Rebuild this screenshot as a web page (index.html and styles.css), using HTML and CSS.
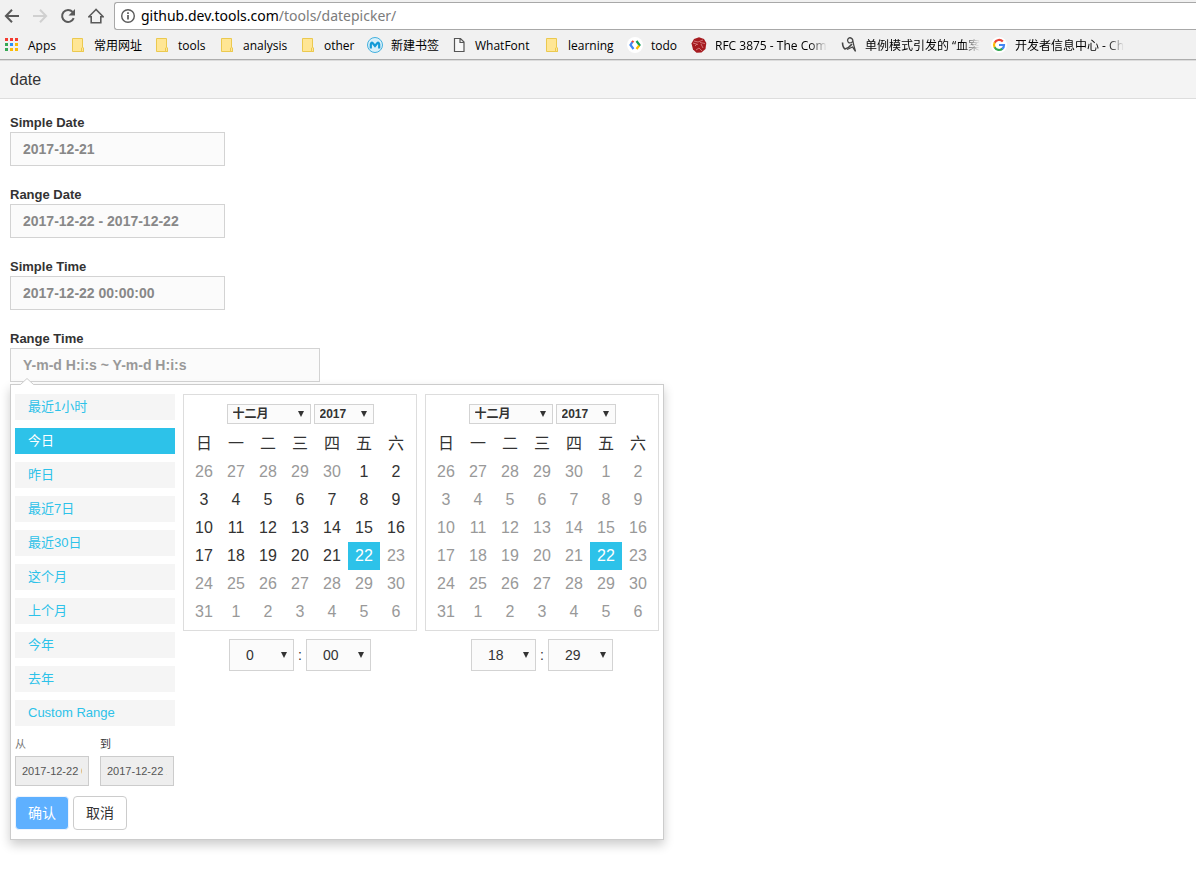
FILE: index.html
```html
<!DOCTYPE html>
<html lang="zh-CN">
<head>
<meta charset="utf-8">
<title>date</title>
<link rel="stylesheet" href="styles.css">
</head>
<body>
<svg class="defs" aria-hidden="true">
  <symbol id="folder" viewBox="0 0 16 16"><path d="M2.500 1.500h10v9.500h1v3.500h-11z" fill="#ffe694" stroke="#ebc94f"/><path d="M11.500 14.500v-3.500q1-1.500 2 0v3.500z" fill="#ffe694" stroke="#ebc94f"/></symbol>
</svg>
<div class="browser">
  <div class="toolbar">
    <button class="nav-btn" aria-label="Back"><svg viewBox="0 0 16 16"><path d="M15 8H2.500M8 1.800 1.900 8 8 14.200" fill="none" stroke="#5a5a5a" stroke-width="2"/></svg></button>
    <button class="nav-btn" aria-label="Forward" disabled><svg viewBox="0 0 16 16"><path d="M1 8h12.500M8 1.800 14.100 8 8 14.200" fill="none" stroke="#d0d0d0" stroke-width="2"/></svg></button>
    <button class="nav-btn" aria-label="Reload"><svg viewBox="0 0 16 16"><path d="M13.700 10.200A6 6 0 1 1 12.600 4" fill="none" stroke="#5a5a5a" stroke-width="2"/><path d="M15 1v6.500H8.500z" fill="#5a5a5a"/></svg></button>
    <button class="nav-btn" aria-label="Home"><svg viewBox="0 0 16 16"><path d="M8 1.500.800 8.800H3.200v6h9.600v-6h2.400z" fill="none" stroke="#5a5a5a" stroke-width="1.600"/></svg></button>
    <div class="omnibox">
      <svg class="info" viewBox="0 0 16 16"><circle cx="8" cy="8" r="6.300" fill="none" stroke="#5a5a5a" stroke-width="1.400"/><path d="M8 7v4.500M8 4.300v1.700" stroke="#5a5a5a" stroke-width="1.700"/></svg>
      <span class="url">github.dev.tools.com<span class="url-path">/tools/datepicker/</span></span>
    </div>
  </div>
  <nav class="bookmarks">
    <a class="bm" href="#"><svg viewBox="0 0 16 16"><path d="M1 1h3v3H1zM6 1h3v3H6zM11 1h3v3h-3z" fill="#f33b30"/><path d="M1 6h3v3H1zM1 11h3v3H1z" fill="#35a854"/><path d="M6 6h3v3H6z" fill="#2a90f5"/><path d="M11 6h3v3h-3zM6 11h3v3H6zM11 11h3v3h-3z" fill="#fbbc05"/></svg><span>Apps</span></a>
    <a class="bm" href="#"><svg><use href="#folder"/></svg><span>常用网址</span></a>
    <a class="bm" href="#"><svg><use href="#folder"/></svg><span>tools</span></a>
    <a class="bm" href="#"><svg><use href="#folder"/></svg><span>analysis</span></a>
    <a class="bm" href="#"><svg><use href="#folder"/></svg><span>other</span></a>
    <a class="bm" href="#"><svg viewBox="0 0 16 16"><circle cx="8" cy="8" r="7.500" fill="#d8f0fa" stroke="#43b0de"/><path d="M3.800 11.500V7.200Q4.300 4.500 6 6.500L8 9l2-2.500Q11.700 4.500 12.200 7.200v4.300" fill="none" stroke="#149bd7" stroke-width="2.200"/></svg><span>新建书签</span></a>
    <a class="bm" href="#"><svg viewBox="0 0 16 16"><path d="M3.500 1.500h6l3.500 3.500v9.500H3.500zM9 1.500V5.500h4" fill="#f8f8f8" stroke="#555" stroke-width="1.200"/></svg><span>WhatFont</span></a>
    <a class="bm" href="#"><svg><use href="#folder"/></svg><span>learning</span></a>
    <a class="bm" href="#"><svg viewBox="0 0 16 16"><circle cx="8" cy="8" r="8" fill="#fff"/><g fill="none" stroke-width="2.200"><path d="M6.500 4 4.800 5.500" stroke="#ea4335"/><path d="M5.200 5.200 3.500 8l3 4" stroke="#4285f4"/><path d="M9.500 4l3 4-.8 1" stroke="#0f9d58"/><path d="M12.200 8.500 9.500 12" stroke="#fbbc05"/></g></svg><span>todo</span></a>
    <a class="bm" href="#"><svg viewBox="0 0 16 16"><path d="M8 .3 13 2l2.300 4-.8 6-4 3.500-5 .2-3.500-3.200L.500 6.500 3 2z" fill="#a61b20"/><path d="M3 4l4 1 5-2M2 6l5 1.500M9 5.500l5 1M4 9l2-2M10 7l2 4M5 13l3-2 3 3" fill="none" stroke="#dd8c8d" stroke-width=".8"/></svg><span>RFC 3875 - The Com</span></a>
    <a class="bm" href="#"><svg viewBox="0 0 16 16"><path d="M1.500 5.500q.2 5 2.500 6.500Q8 11 11 7" fill="none" stroke="#444" stroke-width="1.600"/><path d="M6.500 3Q8-.500 10.800 1.500 13 4 10.500 5.500 7 7 6.500 3M11.500 2q1 6 3 12.500L11.500 10 6 12.500" fill="none" stroke="#444" stroke-width="1.300"/></svg><span>单例模式引发的 “血案</span></a>
    <a class="bm" href="#"><svg viewBox="0 0 16 16"><circle cx="8" cy="8" r="8" fill="#fff"/><g fill="none" stroke-width="2.200"><path d="M11.800 4.600A5 5 0 0 0 3.600 5.700" stroke="#ea4335"/><path d="M3.700 5.500a5 5 0 0 0 0 5" stroke="#fbbc05"/><path d="M3.600 10.300a5 5 0 0 0 7.900 1.300" stroke="#34a853"/><path d="M11.200 11.900A5 5 0 0 0 13 8H8" stroke="#4285f4"/></g></svg><span>开发者信息中心 - Ch</span></a>
  </nav>
</div>
<header class="page-head">date</header>
<main class="form">
  <div class="field"><label for="sd">Simple Date</label><input id="sd" type="text" value="2017-12-21"></div>
  <div class="field"><label for="rd">Range Date</label><input id="rd" type="text" value="2017-12-22 - 2017-12-22"></div>
  <div class="field"><label for="st">Simple Time</label><input id="st" type="text" value="2017-12-22 00:00:00"></div>
  <div class="field"><label for="rt">Range Time</label><input id="rt" class="wide" type="text" placeholder="Y-m-d H:i:s ~ Y-m-d H:i:s">
    <div class="picker">
      <svg class="caret" viewBox="0 0 14 7"><path d="M0 7 7 0l7 7z" fill="#fff"/><path d="M0 6.500h.5l6.500-6 6.500 6h.5" fill="none" stroke="#ccc"/></svg>
      <div class="side">
        <ul class="ranges">
          <li><button>最近1小时</button></li>
          <li><button class="active">今日</button></li>
          <li><button>昨日</button></li>
          <li><button>最近7日</button></li>
          <li><button>最近30日</button></li>
          <li><button>这个月</button></li>
          <li><button>上个月</button></li>
          <li><button>今年</button></li>
          <li><button>去年</button></li>
          <li><button>Custom Range</button></li>
        </ul>
        <div class="bounds">
          <div class="bound"><label class="from" for="from">从</label><input id="from" type="text" value="2017-12-22 00:00:00"></div>
          <div class="bound"><label for="to">到</label><input id="to" type="text" value="2017-12-22 18:29:00"></div>
        </div>
        <div class="actions"><button class="btn primary">确认</button><button class="btn">取消</button></div>
      </div>
      <div class="cal">
        <div class="month">
          <div class="month-head"><select class="sel-month" aria-label="Start month"><option>十二月</option></select><select class="sel-year" aria-label="Start year"><option>2017</option></select></div>
          <table>
            <thead><tr><th>日</th><th>一</th><th>二</th><th>三</th><th>四</th><th>五</th><th>六</th></tr></thead>
            <tbody>
              <tr><td class="off">26</td><td class="off">27</td><td class="off">28</td><td class="off">29</td><td class="off">30</td><td>1</td><td>2</td></tr>
              <tr><td>3</td><td>4</td><td>5</td><td>6</td><td>7</td><td>8</td><td>9</td></tr>
              <tr><td>10</td><td>11</td><td>12</td><td>13</td><td>14</td><td>15</td><td>16</td></tr>
              <tr><td>17</td><td>18</td><td>19</td><td>20</td><td>21</td><td class="on">22</td><td class="off">23</td></tr>
              <tr class="off"><td>24</td><td>25</td><td>26</td><td>27</td><td>28</td><td>29</td><td>30</td></tr>
              <tr class="off"><td>31</td><td>1</td><td>2</td><td>3</td><td>4</td><td>5</td><td>6</td></tr>
            </tbody>
          </table>
        </div>
        <div class="time"><select aria-label="Start hour"><option>0</option></select><span>:</span><select aria-label="Start minute"><option>00</option></select></div>
      </div>
      <div class="cal">
        <div class="month">
          <div class="month-head"><select class="sel-month" aria-label="End month"><option>十二月</option></select><select class="sel-year" aria-label="End year"><option>2017</option></select></div>
          <table>
            <thead><tr><th>日</th><th>一</th><th>二</th><th>三</th><th>四</th><th>五</th><th>六</th></tr></thead>
            <tbody class="off">
              <tr><td>26</td><td>27</td><td>28</td><td>29</td><td>30</td><td>1</td><td>2</td></tr>
              <tr><td>3</td><td>4</td><td>5</td><td>6</td><td>7</td><td>8</td><td>9</td></tr>
              <tr><td>10</td><td>11</td><td>12</td><td>13</td><td>14</td><td>15</td><td>16</td></tr>
              <tr><td>17</td><td>18</td><td>19</td><td>20</td><td>21</td><td class="on">22</td><td>23</td></tr>
              <tr><td>24</td><td>25</td><td>26</td><td>27</td><td>28</td><td>29</td><td>30</td></tr>
              <tr><td>31</td><td>1</td><td>2</td><td>3</td><td>4</td><td>5</td><td>6</td></tr>
            </tbody>
          </table>
        </div>
        <div class="time"><select aria-label="End hour"><option>18</option></select><span>:</span><select aria-label="End minute"><option>29</option></select></div>
      </div>
    </div>
  </div>
</main>
</body>
</html>
```
FILE: styles.css
```css
* { box-sizing: border-box; }
body {
  min-height: 100vh;
  margin: 0;
  background: #fff;
  color: #333;
  font-family: "Liberation Sans", "Noto Sans CJK SC", sans-serif;
  font-size: 14px;
}
button, input, select { font: inherit; color: inherit; margin: 0; border-radius: 0; }
.defs { display: none; }

/* Browser bars */
.browser { background: #f1f1f1; border-bottom: 1px solid #adadad; }
.toolbar { display: flex; align-items: center; gap: 12px; padding: 2px 0 0 4px; }
.nav-btn { width: 16px; height: 16px; padding: 0; border: 0; background: none; }
.nav-btn svg { display: block; width: 16px; height: 16px; }
.omnibox {
  flex: 1;
  display: flex;
  align-items: center;
  gap: 5px;
  height: 28px;
  margin-left: -2px;
  padding-left: 5px;
  border: 1px solid #a8a8a8;
  border-right: 0;
  border-radius: 3px 0 0 3px;
  background: #fff;
}
.info { width: 16px; height: 16px; }
.url { font-family: "Noto Sans", sans-serif; font-size: 14px; line-height: 20px; color: #000; }
.url-path { color: #7c7c7c; }
.bookmarks {
  display: grid;
  grid-template-columns: 66px 84px 65px 81px 67px 84px 93px 83px 64px 150px 150px 137px;
  align-items: center;
  height: 29px;
  padding: 1px 0 0 4px;
}
.bm {
  display: flex;
  align-items: center;
  gap: 8px;
  color: #000;
  font-family: "Open Sans", "Noto Sans CJK SC", sans-serif;
  font-size: 12px;
  line-height: 18px;
  text-decoration: none;
  white-space: nowrap;
}
.bm svg { flex: none; width: 16px; height: 16px; }
.bm span { padding-top: 1px; }
.bm:nth-child(n+10) span { -webkit-mask-image: linear-gradient(to right, #000 85%, transparent); mask-image: linear-gradient(to right, #000 85%, transparent); }

/* Page */
.page-head {
  padding: 8px 10px;
  border-top: 1px solid #dcdcdc;
  border-bottom: 1px solid #ddd;
  background: #f4f4f4;
  font-size: 16px;
  line-height: 21px;
}
.form { display: flex; flex-direction: column; gap: 20px; padding: 15px 10px; }
.field { position: relative; display: flex; flex-direction: column; align-items: flex-start; }
.field > label { font-size: 13px; font-weight: bold; line-height: 18px; }
.field > input {
  width: 215px;
  height: 34px;
  padding: 0 12px;
  border: 1px solid #d3d3d3;
  background: #fbfbfb;
  color: #888;
  font-weight: bold;
}
.field > input.wide { width: 310px; }
.field > input::placeholder { color: #999; opacity: 1; }

/* Range picker popup */
.picker {
  position: absolute;
  top: 100%;
  left: 0;
  display: flex;
  align-items: flex-start;
  gap: 8px;
  margin-top: 2px;
  padding: 9px 4px;
  border: 1px solid #ccc;
  background: #fff;
  box-shadow: 0 5px 10px rgba(0, 0, 0, .2);
}
.caret { position: absolute; top: -7px; left: 9px; width: 14px; height: 7px; }
.side { width: 160px; }
.ranges { display: flex; flex-direction: column; gap: 8px; margin: 0; padding: 0; list-style: none; }
.ranges button {
  display: block;
  width: 100%;
  height: 26px;
  padding: 0 13px;
  border: 0;
  background: #f5f5f5;
  color: #2dc2e9;
  font-size: 13px;
  line-height: 26px;
  text-align: left;
}
.ranges .active { background: #2dc2e9; color: #fff; }
.bounds { display: flex; gap: 11px; margin-top: 10px; }
.bound { width: 74px; }
.bound label { display: block; height: 20px; font-size: 11px; line-height: 16px; }
.bound .from { color: #777; }
.bound input {
  width: 100%;
  height: 30px;
  padding: 0 6px;
  border: 1px solid #ccc;
  background: #eee;
  color: #555;
  font-size: 11px;
}
.actions { display: flex; gap: 4px; margin-top: 10px; }
.btn {
  width: 54px;
  height: 34px;
  padding: 0;
  border: 1px solid #ccc;
  border-radius: 4px;
  background: #fff;
  font-size: 14px;
  line-height: 32px;
}
.primary { border-color: #eef4fd; background: #5eb0ff; color: #fff; }

/* Calendars */
.month { padding: 4px; border: 1px solid #ddd; }
.month-head { display: flex; justify-content: center; gap: 3px; height: 31px; padding-top: 5px; }
select {
  appearance: none;
  border: 1px solid #d3d3d3;
  background: #fbfbfb url("data:image/svg+xml,%3Csvg xmlns='http://www.w3.org/2000/svg' viewBox='0 0 6 6'%3E%3Cpath d='M0 0h6L3 6z' fill='%23333'/%3E%3C/svg%3E") no-repeat right 6px center / 6px 6px;
}
.month-head select { height: 20px; padding: 0 5px; font-size: 12px; font-weight: bold; line-height: 18px; }
.sel-month { width: 84px; }
.sel-year { width: 60px; }
table { border-collapse: collapse; font-size: 16px; }
th, td { width: 32px; height: 28px; padding: 0; line-height: 20px; text-align: center; }
th { font-weight: normal; }
.off { color: #999; }
td.on { background: #2dc2e9; color: #fff; }
.time { display: flex; justify-content: center; align-items: center; margin-top: 8px; }
.time span { width: 12px; text-align: center; }
.time select { width: 65px; height: 32px; padding: 0 16px; }
```
